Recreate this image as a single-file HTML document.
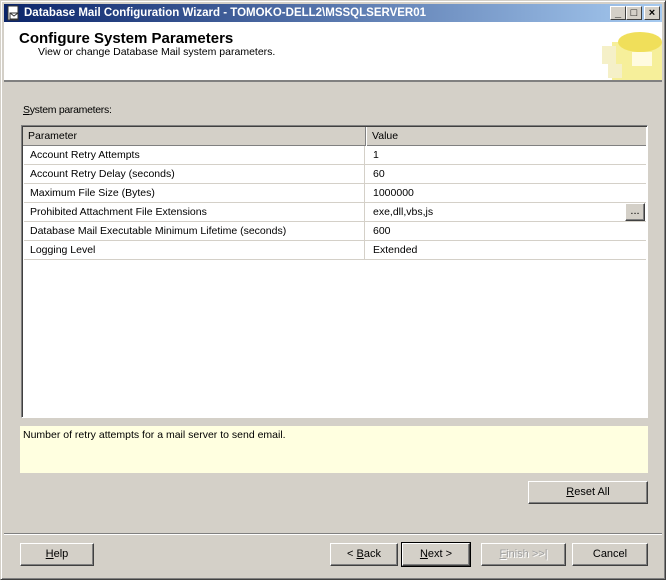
<!DOCTYPE html>
<html><head><style>
*{margin:0;padding:0;box-sizing:border-box}
body{width:666px;height:580px;background:#d4d0c8;font-family:"Liberation Sans",sans-serif;font-size:10.5px;color:#000;position:relative;overflow:hidden}
.win{position:absolute;left:0;top:0;width:666px;height:580px;border:1px solid #404040;border-top-color:#d4d0c8;border-left-color:#d4d0c8;box-shadow:inset 1px 1px 0 #fff,inset -1px -1px 0 #808080}
.title{position:absolute;left:4px;top:4px;width:658px;height:18px;background:linear-gradient(90deg,#0a246a,#a6caf0);color:#fff;font-weight:bold;font-size:11.5px;line-height:18px;padding-left:20px}
.tb{position:absolute;top:6px;width:16px;height:14px;background:#d4d0c8;border:1px solid;border-color:#fff #404040 #404040 #fff;font-size:11px;font-weight:bold;text-align:center;line-height:12px;color:#000}
.hdr{position:absolute;left:4px;top:22px;width:658px;height:60px;background:#fff;border-bottom:2px solid #808080}
.btn{position:absolute;height:23px;background:#d4d0c8;border:1px solid;border-color:#fff #404040 #404040 #fff;box-shadow:inset -1px -1px 0 #808080;text-align:center;line-height:21px;font-size:11px}
.grid{position:absolute;left:21px;top:125px;width:627px;height:293px;background:#fff;border:1px solid;border-color:#808080 #fff #fff #808080;box-shadow:inset 1px 1px 0 #404040}
.row{position:absolute;left:2px;width:622px;height:19px;border-bottom:1px solid #d4d0c8;line-height:18px}
.row span{position:absolute}
</style></head><body>
<div class="win"></div>
<div class="title"><svg style="position:absolute;left:2px;top:1px" width="16" height="16"><rect x="2" y="1" width="10" height="14" fill="#fff" stroke="#333"/><rect x="4" y="8" width="8" height="6" fill="#fff" stroke="#333"/><path d="M4 8l4 3 4-3" stroke="#333" fill="none"/></svg>Database Mail Configuration Wizard - TOMOKO-DELL2\MSSQLSERVER01</div>
<div class="tb" style="left:610px">_</div><div class="tb" style="left:626px">□</div><div class="tb" style="left:644px">×</div>
<div class="hdr">
<div style="position:absolute;left:15px;top:8px;font-size:15px;font-weight:bold">Configure System Parameters</div>
<div style="position:absolute;left:34px;top:24px;font-size:10.5px">View or change Database Mail system parameters.</div>
<svg style="position:absolute;right:0;top:2px" width="60" height="56"><rect x="10" y="18" width="50" height="38" fill="#f6ef9a"/><ellipse cx="38" cy="18" rx="22" ry="10" fill="#f0df5a"/><rect x="0" y="22" width="14" height="18" fill="#f5f0c8"/><rect x="6" y="40" width="14" height="14" fill="#f5f0c8"/><rect x="30" y="28" width="20" height="14" fill="#fffbe0"/></svg>
</div>
<div style="position:absolute;left:23px;top:104px;letter-spacing:-0.3px"><u>S</u>ystem parameters:</div>
<div class="grid">
<div style="position:absolute;left:1px;top:1px;width:623px;height:19px;background:#d4d0c8;border-bottom:1px solid #808080"><span style="position:absolute;left:5px;top:3px">Parameter</span><div style="position:absolute;left:342px;top:0;width:2px;height:19px;border-left:1px solid #808080;border-right:1px solid #fff"></div><span style="position:absolute;left:349px;top:3px">Value</span></div>
<div class="row" style="top:20px"><span style="left:6px">Account Retry Attempts</span><span style="left:349px">1</span></div>
<div class="row" style="top:39px"><span style="left:6px">Account Retry Delay (seconds)</span><span style="left:349px">60</span></div>
<div class="row" style="top:58px"><span style="left:6px">Maximum File Size (Bytes)</span><span style="left:349px">1000000</span></div>
<div class="row" style="top:77px"><span style="left:6px">Prohibited Attachment File Extensions</span><span style="left:349px">exe,dll,vbs,js</span><div class="btn" style="left:601px;top:0;width:20px;height:18px;line-height:14px">...</div></div>
<div class="row" style="top:96px"><span style="left:6px">Database Mail Executable Minimum Lifetime (seconds)</span><span style="left:349px">600</span></div>
<div class="row" style="top:115px"><span style="left:6px">Logging Level</span><span style="left:349px">Extended</span></div>
<div style="position:absolute;left:342px;top:20px;width:1px;height:114px;background:#d4d0c8"></div>
</div>
<div style="position:absolute;left:20px;top:426px;width:628px;height:47px;background:#ffffe0;padding:3px 3px;font-size:10.5px">Number of retry attempts for a mail server to send email.</div>
<div class="btn" style="left:528px;top:481px;width:120px"><u>R</u>eset All</div>
<div style="position:absolute;left:4px;top:533px;width:658px;height:2px;border-top:1px solid #808080;border-bottom:1px solid #fff"></div>
<div class="btn" style="left:20px;top:543px;width:74px"><u>H</u>elp</div>
<div class="btn" style="left:330px;top:543px;width:68px">&lt; <u>B</u>ack</div>
<div class="btn" style="left:402px;top:543px;width:68px;outline:1px solid #000"><u>N</u>ext &gt;</div>
<div class="btn" style="left:481px;top:543px;width:85px;color:#a0a0a0;text-shadow:1px 1px 0 #fff"><u>F</u>inish &gt;&gt;|</div>
<div class="btn" style="left:572px;top:543px;width:76px">Cancel</div>
</body></html>
